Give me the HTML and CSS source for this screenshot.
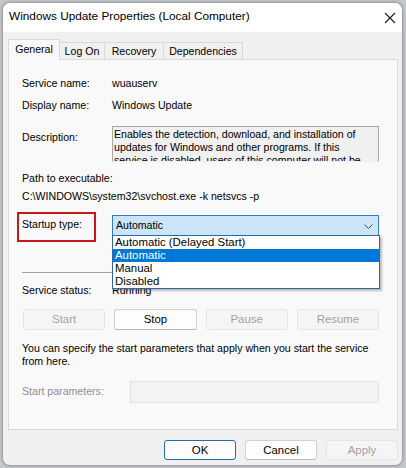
FILE: index.html
```html
<!DOCTYPE html>
<html>
<head>
<meta charset="utf-8">
<link rel="stylesheet" href="styles.css">
</head>
<body>
<div class="window">
  <div class="titlebar">
    <span class="title">Windows Update Properties (Local Computer)</span>
    <svg class="close" width="12" height="12" viewBox="0 0 12 12"><path d="M1 1 L11 11 M11 1 L1 11" stroke="#1a1a1a" stroke-width="1.1" fill="none"/></svg>
  </div>
  <div class="body">
    <div class="tabs">
      <div class="tab sel t1">General</div>
      <div class="tab t2">Log On</div>
      <div class="tab t3">Recovery</div>
      <div class="tab t4">Dependencies</div>
    </div>
    <div class="panel">
      <div class="row r1"><span class="lbl">Service name:</span><span>wuauserv</span></div>
      <div class="row r2"><span class="lbl">Display name:</span><span>Windows Update</span></div>
      <div class="row r3"><span class="lbl lbl-desc">Description:</span>
        <div class="desc">Enables the detection, download, and installation of updates for Windows and other programs. If this service is disabled, users of this computer will not be able to use Windows Update.</div>
      </div>
      <div class="pathlbl">Path to executable:</div>
      <div class="pathval">C:\WINDOWS\system32\svchost.exe -k netsvcs -p</div>
      <div class="row r4"><span class="lbl lbl-startup"><span class="mark">Startup type:</span></span>
        <div class="combo">
          <span>Automatic</span>
          <svg class="chev" width="9" height="5" viewBox="0 0 9 5"><path d="M0.5 0.5 L4.5 4.5 L8.5 0.5" stroke="#505050" stroke-width="1" fill="none"/></svg>
          <ul class="list">
            <li>Automatic (Delayed Start)</li>
            <li class="hl">Automatic</li>
            <li>Manual</li>
            <li>Disabled</li>
          </ul>
        </div>
      </div>
      <div class="sep"></div>
      <div class="row r5"><span class="lbl">Service status:</span><span>Running</span></div>
      <div class="btns">
        <div class="btn dis">Start</div>
        <div class="btn">Stop</div>
        <div class="btn dis">Pause</div>
        <div class="btn dis">Resume</div>
      </div>
      <p class="para">You can specify the start parameters that apply when you start the service from here.</p>
      <div class="row r6"><span class="lbl lbl-param">Start parameters:</span><div class="input"></div></div>
    </div>
    <div class="footer">
      <div class="fbtn def">OK</div>
      <div class="fbtn">Cancel</div>
      <div class="fbtn dis">Apply</div>
    </div>
  </div>
</div>
</body>
</html>
```

FILE: styles.css
```css
* { box-sizing: border-box; }
html, body { margin: 0; padding: 0; }
body {
  width: 406px; height: 468px; overflow: hidden;
  background: #c4c8cc;
  font-family: "Liberation Sans", Arial, sans-serif;
  font-size: 10.6px; line-height: 13px; color: #000;
}
.window {
  margin: 2px 0 0 2px;
  width: 401px; height: 464px;
  border: 1px solid #a3a3a3;
  border-radius: 8px;
  overflow: hidden;
  background: #f0f0f0;
  box-shadow: 0 0 3px rgba(0,0,0,0.25);
  display: flex; flex-direction: column;
}
.titlebar {
  height: 29px; background: #fff;
  display: flex; align-items: center; justify-content: space-between;
  padding: 0 5px 3px 6px;
}
.title { font-size: 11.8px; }
.close { margin-top: 4px; margin-right: 1px; }
.body { flex: 1; padding: 7px 0 0 5px; }
.tabs { display: flex; align-items: flex-end; height: 20px; position: relative; z-index: 2; }
.tab {
  height: 17px; border: 1px solid #d9d9d9; border-bottom: none; margin-left: -1px;
  background: #f0f0f0; text-align: center; line-height: 16px;
}
.tab.sel { height: 21px; margin-bottom: -1px; margin-left: 0; background: #f9f9f9; line-height: 19px; }
.t1 { width: 52px; }
.t2 { width: 46px; }
.t3 { width: 60px; }
.t4 { width: 80px; }
.panel {
  width: 390px; height: 371px;
  background: #f9f9f9; border: 1px solid #d9d9d9;
  padding: 17px 0 0 13px;
  position: relative; z-index: 1;
}
.row { display: flex; align-items: flex-start; }
.lbl { width: 90px; flex: none; }
.r2 { margin-top: 9px; }
.r3 { margin-top: 14px; }
.lbl-desc { padding-top: 5px; }
.desc {
  width: 267px; height: 36px; overflow: hidden;
  border: 1px solid #a8a8a8; border-bottom-color: #f0f0f0;
  background: #f0f0f0; padding: 1px 4px 0 1px;
}
.pathlbl { margin-top: 10px; }
.pathval { margin-top: 5px; }
.r4 { margin-top: 12px; }
.lbl-startup { padding-top: 3px; }
.mark { position: relative; }
.mark::after {
  content: ""; position: absolute; left: -5px; top: -6px;
  width: 75px; height: 26px; border: 2px solid #c8161d;
}
.combo {
  position: relative; width: 267px; height: 21px;
  border: 1px solid #2f7fc0; background: #cce4f7;
  padding: 3px 0 0 3px;
}
.chev { position: absolute; right: 5px; top: 8px; }
.list {
  position: absolute; left: -1px; top: 19px; margin: 0; padding: 0; list-style: none;
  width: 268px; height: 54px; background: #fff;
  border: 1px solid #2a6aa0;
  box-shadow: 2px 2px 2px rgba(0,0,0,0.25);
  z-index: 5;
}
.list li { height: 13px; line-height: 13px; padding-left: 2px; font-size: 11.4px; }
.list li.hl { background: #0078d7; color: #fff; }
.sep { width: 356px; height: 1px; background: #a0a0a0; margin-top: 36px; }
.r5 { margin-top: 11px; }
.btns {
  margin-top: 12px; margin-left: 1px; width: 356px;
  display: grid; grid-template-columns: repeat(4, 1fr); gap: 9px;
}
.btn, .fbtn {
  height: 21px; border: 1px solid #d0d0d0; border-bottom-color: #b8b8b8;
  border-radius: 3px; background: #fdfdfd;
  text-align: center; line-height: 19px; font-size: 11.4px;
}
.btn.dis, .fbtn.dis { background: #f5f5f5; border-color: #e5e5e5; color: #a2a2a2; }
.para { margin: 12px 0 0 0; width: 360px; }
.r6 { margin-top: 13px; }
.lbl-param { width: 108px; padding-top: 4px; color: #8f8f8f; }
.input { width: 249px; height: 22px; border: 1px solid #e3e3e3; background: #f3f3f3; }
.footer {
  width: 390px; margin-top: 10px;
  display: flex; justify-content: flex-end; gap: 9px;
}
.fbtn { width: 72px; height: 20px; line-height: 18px; }
.fbtn.def { border: 1px solid #1f6fb0; }
```
